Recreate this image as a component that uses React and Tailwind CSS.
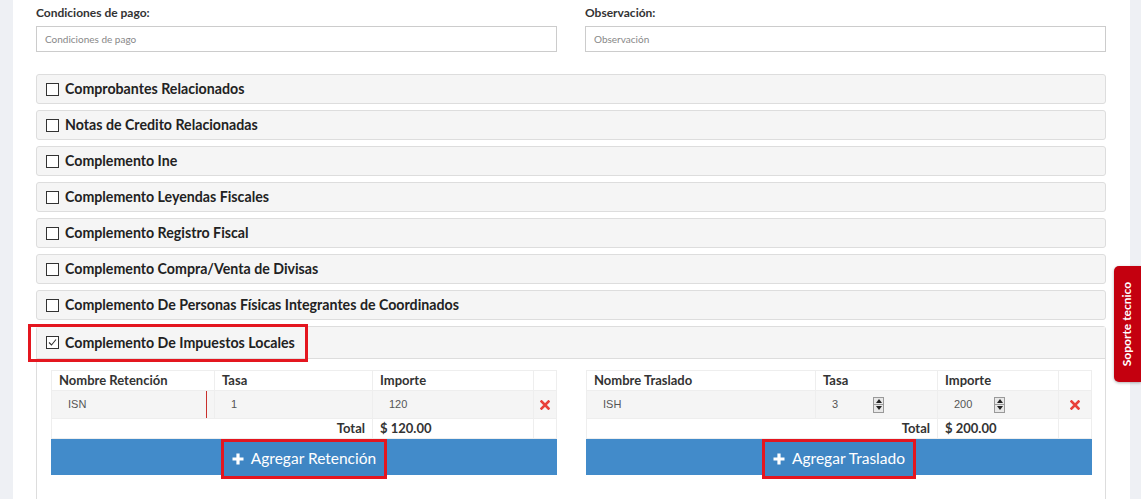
import React from 'react';

const font = { fontFamily: '"Source Sans Pro", Lato, "Liberation Sans", sans-serif' };

const panels = [
  'Comprobantes Relacionados',
  'Notas de Credito Relacionadas',
  'Complemento Ine',
  'Complemento Leyendas Fiscales',
  'Complemento Registro Fiscal',
  'Complemento Compra/Venta de Divisas',
  'Complemento De Personas Físicas Integrantes de Coordinados',
];

function Box({ checked }) {
  return (
    <span className="w-[13px] h-[13px] border border-[#333] bg-white flex items-center justify-center shrink-0">
      {checked && (
        <svg width="11" height="11" viewBox="0 0 11 11">
          <path d="M2 5.5 L4.5 8 L9 2.5" fill="none" stroke="#333" strokeWidth="1.1" />
        </svg>
      )}
    </span>
  );
}

function Spinner() {
  return (
    <span className="w-[11px] h-[16px] border border-[#999] bg-[#e8e8e8] flex flex-col">
      <span className="flex-1 flex items-center justify-center border-b border-[#999]">
        <svg width="6" height="4" viewBox="0 0 6 4"><path d="M3 0 L6 4 L0 4Z" fill="#222" /></svg>
      </span>
      <span className="flex-1 flex items-center justify-center">
        <svg width="6" height="4" viewBox="0 0 6 4"><path d="M0 0 L6 0 L3 4Z" fill="#222" /></svg>
      </span>
    </span>
  );
}

function Cross() {
  return (
    <svg width="10" height="10" viewBox="0 0 10 10">
      <path d="M1.5 1.5 L8.5 8.5 M8.5 1.5 L1.5 8.5" stroke="#e8413a" strokeWidth="2.6" strokeLinecap="square" />
    </svg>
  );
}

function TaxTable({ name, cols, row, total, button, spin }) {
  return (
    <div>
      <div className="border border-[#eee] text-[13px] text-[#333]">
        <div className="flex h-[19px] items-center font-bold">
          <div className="pl-[7px] h-full flex items-center border-r border-[#eee]" style={{ width: cols[0] }}>{name}</div>
          <div className="pl-[7px] h-full flex items-center border-r border-[#eee]" style={{ width: cols[1] }}>Tasa</div>
          <div className="pl-[7px] h-full flex items-center border-r border-[#eee]" style={{ width: cols[2] }}>Importe</div>
          <div className="flex-1" />
        </div>
        <div className="flex h-[28px] items-center bg-[#f5f5f5] border-t border-[#eee] text-[11px] text-[#555]" style={{ fontFamily: '"Liberation Sans", Arial, sans-serif' }}>
          <div className="pl-[16px] h-full flex items-center border-r border-[#eee]" style={{ width: cols[0] }}>
            <span className="flex-1">{row[0]}</span>
            {!spin && <span className="w-px h-full bg-[#c9302c] mr-[7px]" />}
          </div>
          <div className="pl-[16px] pr-[53px] h-full flex items-center justify-between border-r border-[#eee]" style={{ width: cols[1] }}>
            <span>{row[1]}</span>
            {spin && <Spinner />}
          </div>
          <div className="pl-[16px] pr-[53px] h-full flex items-center justify-between border-r border-[#eee]" style={{ width: cols[2] }}>
            <span>{row[2]}</span>
            {spin && <Spinner />}
          </div>
          <div className="flex-1 flex justify-center"><Cross /></div>
        </div>
        <div className="flex h-[20px] items-center font-bold border-t border-[#eee]">
          <div className="pr-[7px] text-right h-full flex items-center justify-end border-r border-[#eee]" style={{ width: cols[0] + cols[1] }}>Total</div>
          <div className="pl-[7px] h-full flex items-center border-r border-[#eee]" style={{ width: cols[2] }}>{total}</div>
          <div className="flex-1" />
        </div>
      </div>
      <div className="h-[36px] bg-[#428bca] flex justify-center">
        <div className="border-[3px] border-[#e4161f] h-[40px] px-[8px] flex items-center gap-[7px] text-white text-[15.5px] bg-[#3f86c4]">
          <svg width="12" height="12" viewBox="0 0 12 12"><path d="M6 0.5 V11.5 M0.5 6 H11.5" stroke="#fff" strokeWidth="3.2" /></svg>
          <span>{button}</span>
        </div>
      </div>
    </div>
  );
}

export default function App() {
  return (
    <div className="w-[1141px] h-[499px] flex bg-[#eef0f4] overflow-hidden relative text-[#333]" style={font}>
      <div className="w-[13px] shrink-0" />
      <div className="flex-1 bg-white pl-[23px] pr-[24px] pt-[6px]">
        <div className="grid grid-cols-2 gap-x-[28px]">
          {['Condiciones de pago', 'Observación'].map((l) => (
            <div key={l}>
              <div className="text-[12px] font-bold h-[14px] leading-[14px] mb-[6px]">{l}:</div>
              <div className="h-[26px] border border-[#ccc] flex items-center pl-[8px] text-[10px] text-[#888]">{l}</div>
            </div>
          ))}
        </div>
        <div className="mt-[22px] flex flex-col gap-[6px]">
          {panels.map((p) => (
            <div key={p} className="h-[30px] bg-[#f5f5f5] border border-[#ddd] rounded-[3px] flex items-center gap-[6px] pl-[9px] text-[14.2px] font-bold text-[#222]">
              <Box />
              <span>{p}</span>
            </div>
          ))}
          <div className="border border-[#ddd] rounded-t-[3px] h-[200px]">
            <div className="h-[32px] bg-[#f5f5f5] border-b border-[#ddd] flex items-center relative">
              <div className="absolute left-[-9px] top-[-3px] w-[280px] h-[38px] border-[3px] border-[#e4161f]" />
              <div className="flex items-center gap-[6px] pl-[9px] text-[14.2px] font-bold text-[#222]">
                <Box checked />
                <span>Complemento De Impuestos Locales</span>
              </div>
            </div>
            <div className="grid grid-cols-2 gap-x-[29px] pl-[14px] pr-[13px] pt-[11px]">
              <TaxTable name="Nombre Retención" cols={[163, 158, 161]} row={['ISN', '1', '120']} total="$ 120.00" button="Agregar Retención" />
              <TaxTable name="Nombre Traslado" cols={[229, 122, 121]} row={['ISH', '3', '200']} total="$ 200.00" button="Agregar Traslado" spin />
            </div>
          </div>
        </div>
      </div>
      <div className="w-[11px] shrink-0" />
      <div className="absolute right-0 top-[266px] w-[27px] h-[116px] bg-[#c4000f] rounded-l-[5px] shadow-[0_1px_3px_rgba(0,0,0,0.3)] flex items-center justify-center">
        <span className="text-white text-[12px] font-bold whitespace-nowrap -rotate-90">Soporte tecnico</span>
      </div>
    </div>
  );
}
